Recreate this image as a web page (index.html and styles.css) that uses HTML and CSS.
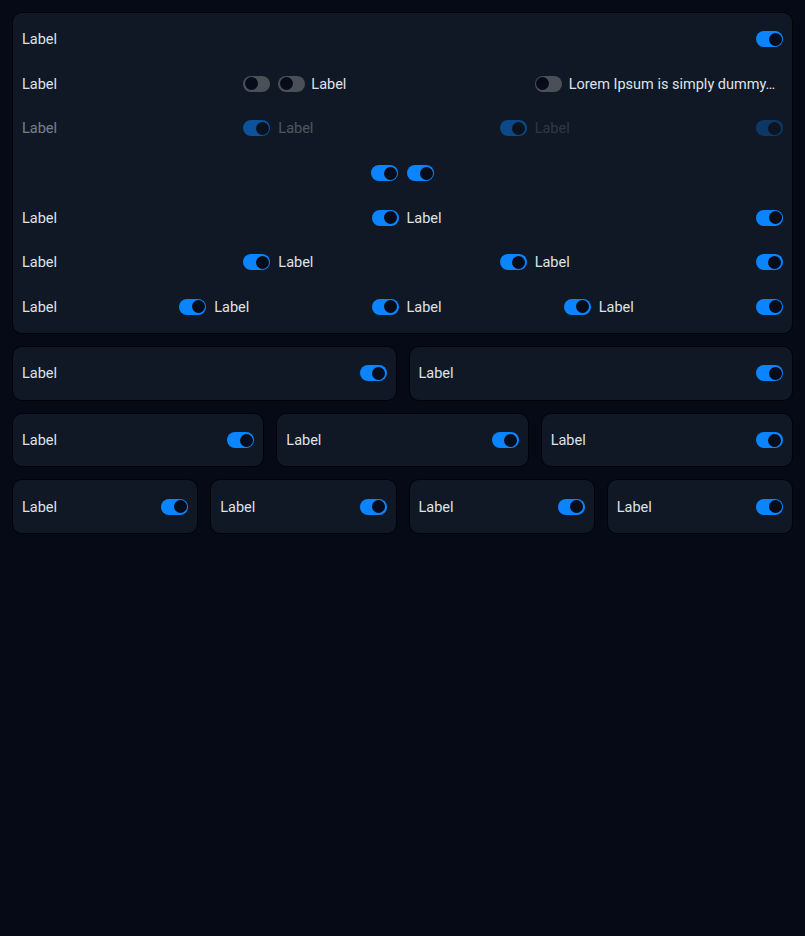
FILE: index.html
```html
<!doctype html>
<html>
<head>
<meta charset="utf-8">
<title>Toggles</title>
<link rel="stylesheet" href="styles.css">
</head>
<body>
<div class="page">
	<div class="card">
		<div class="row cols1">
			<div class="item"><span class="lbl">Label</span><span class="sw on"></span></div>
		</div>
		<div class="row cols3">
			<div class="item"><span class="lbl">Label</span><span class="sw"></span></div>
			<div class="item start"><span class="sw"></span><span class="lbl">Label</span></div>
			<div class="item start"><span class="sw"></span><span class="lbl clip">Lorem Ipsum is simply dummy…</span></div>
		</div>
		<div class="row cols3">
			<div class="item dis1"><span class="lbl">Label</span><span class="sw on"></span></div>
			<div class="item dis2"><span class="lbl">Label</span><span class="sw on"></span></div>
			<div class="item dis3"><span class="lbl">Label</span><span class="sw on"></span></div>
		</div>
		<div class="row center">
			<span class="sw on"></span><span class="sw on"></span>
		</div>
		<div class="row cols2">
			<div class="item"><span class="lbl">Label</span><span class="sw on"></span></div>
			<div class="item"><span class="lbl">Label</span><span class="sw on"></span></div>
		</div>
		<div class="row cols3">
			<div class="item"><span class="lbl">Label</span><span class="sw on"></span></div>
			<div class="item"><span class="lbl">Label</span><span class="sw on"></span></div>
			<div class="item"><span class="lbl">Label</span><span class="sw on"></span></div>
		</div>
		<div class="row cols4">
			<div class="item"><span class="lbl">Label</span><span class="sw on"></span></div>
			<div class="item"><span class="lbl">Label</span><span class="sw on"></span></div>
			<div class="item"><span class="lbl">Label</span><span class="sw on"></span></div>
			<div class="item"><span class="lbl">Label</span><span class="sw on"></span></div>
		</div>
	</div>

	<div class="grid cols2">
		<div class="card"><div class="item"><span class="lbl">Label</span><span class="sw on"></span></div></div>
		<div class="card"><div class="item"><span class="lbl">Label</span><span class="sw on"></span></div></div>
	</div>
	<div class="grid cols3">
		<div class="card"><div class="item"><span class="lbl">Label</span><span class="sw on"></span></div></div>
		<div class="card"><div class="item"><span class="lbl">Label</span><span class="sw on"></span></div></div>
		<div class="card"><div class="item"><span class="lbl">Label</span><span class="sw on"></span></div></div>
	</div>
	<div class="grid cols4">
		<div class="card"><div class="item"><span class="lbl">Label</span><span class="sw on"></span></div></div>
		<div class="card"><div class="item"><span class="lbl">Label</span><span class="sw on"></span></div></div>
		<div class="card"><div class="item"><span class="lbl">Label</span><span class="sw on"></span></div></div>
		<div class="card"><div class="item"><span class="lbl">Label</span><span class="sw on"></span></div></div>
	</div>
</div>
</body>
</html>
```
FILE: styles.css
```css
*{margin:0; padding:0; box-sizing:border-box;}
html,body{background:#050a16;}
body{font-family:Roboto, "Liberation Sans", sans-serif; font-size:14.5px; color:#dfe3e9; min-height:936px;}
.page{padding:12px; display:flex; flex-direction:column; gap:12px;}
.card{background:#0f1824; border:1px solid #010307; border-radius:10px; padding:4px 9px;}
.row{display:grid; gap:8px; height:44.6px; align-items:center;}
.cols1{grid-template-columns:1fr;}
.cols2{grid-template-columns:repeat(2,1fr);}
.cols3{grid-template-columns:repeat(3,1fr);}
.cols4{grid-template-columns:repeat(4,1fr);}
.row.center{display:flex; justify-content:center; gap:9px;}
.grid{display:grid; gap:12px;}
.item{display:flex; align-items:center; justify-content:space-between; gap:6px; min-width:0; height:44.6px;}
.item.start{justify-content:flex-start;}
.lbl{white-space:nowrap; line-height:20px; padding-top:2px;}
.lbl.clip{overflow:hidden; text-overflow:ellipsis; min-width:0; margin-left:1px;}
.sw{flex:none; position:relative; width:27px; height:16px; border-radius:8px; background:#4b4f57;}
.sw:after{content:""; position:absolute; top:1.5px; left:1.5px; width:13px; height:13px; border-radius:50%; background:#060c1a;}
.sw.on{background:#0a84ff;}
.sw.on:after{left:12.5px;}
.dis1 .lbl{opacity:.5;}
.dis1 .sw{opacity:.55;}
.dis2 .lbl{opacity:.3;}
.dis2 .sw{opacity:.45;}
.dis3 .lbl{opacity:.15;}
.dis3 .sw{opacity:.3;}
```
